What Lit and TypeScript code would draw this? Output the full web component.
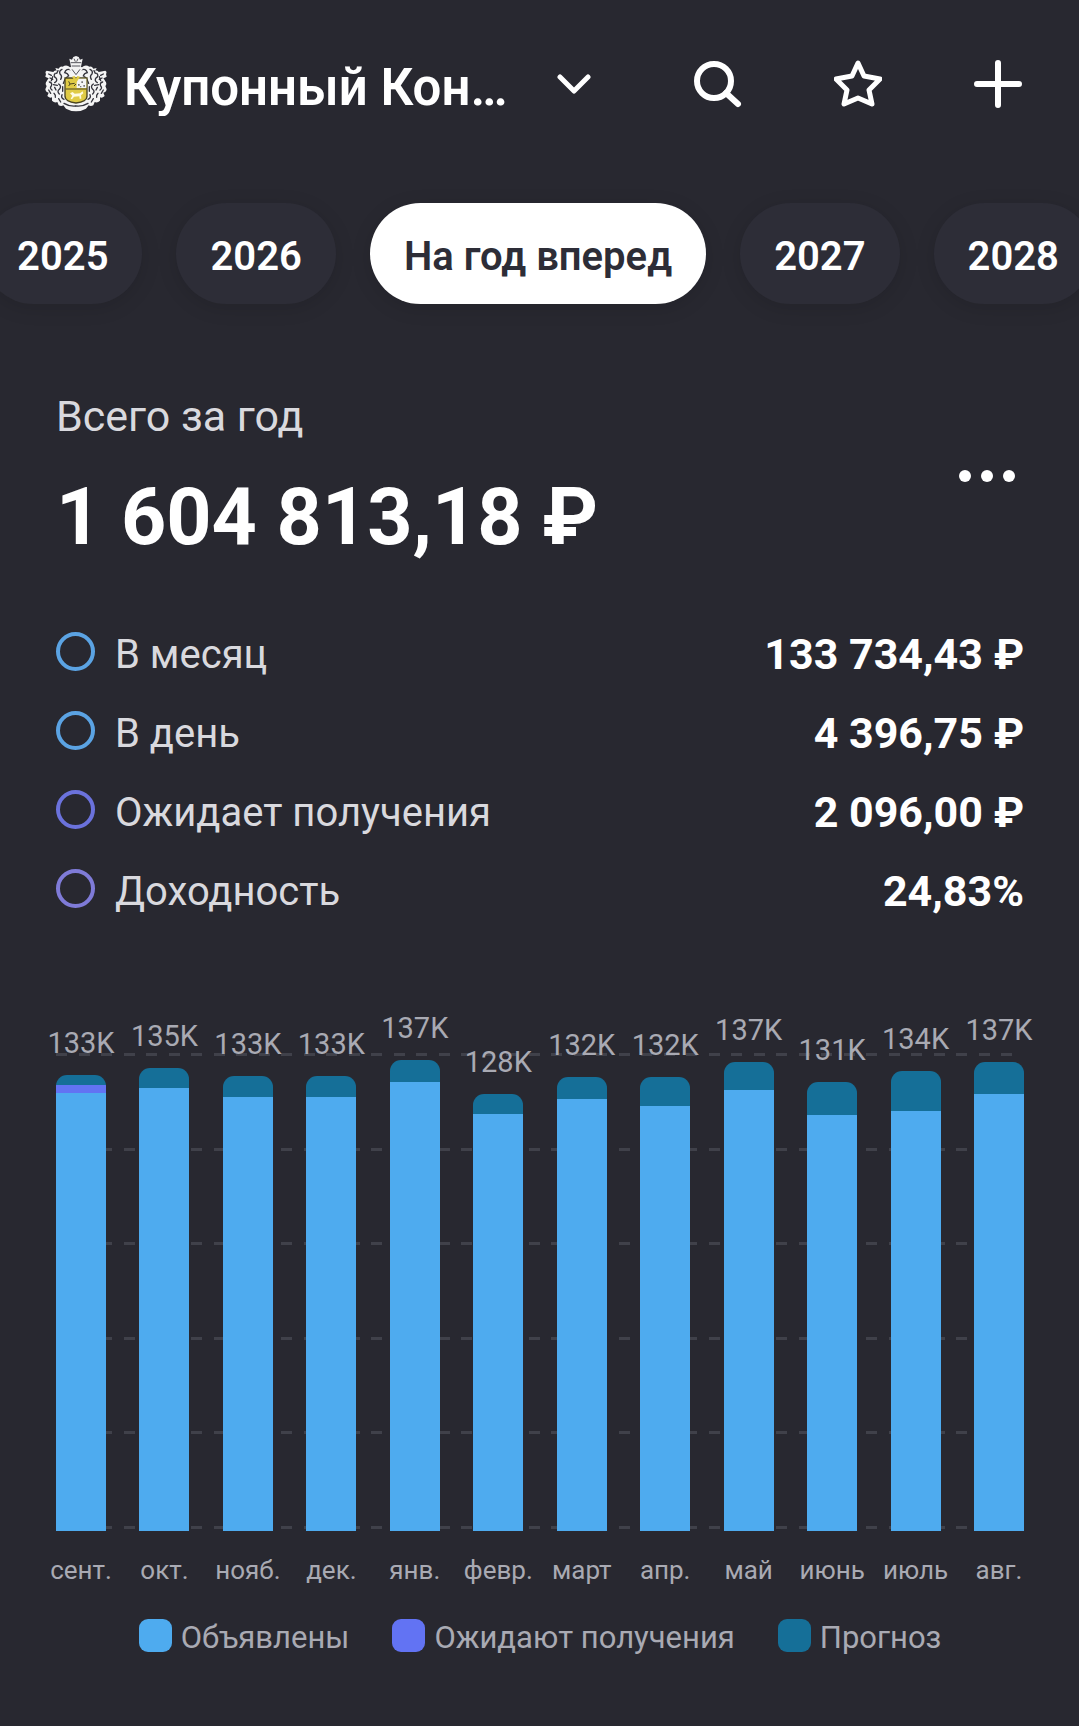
import {LitElement, html, css, svg} from "lit";
import {customElement, property, state} from "lit/decorators.js";
import {classMap} from "lit/directives/class-map.js";

interface Month {
  name: string;
  announced: number;
  pending: number;
  forecast: number;
}

// amounts are in thousands of roubles
const MONTHS: Month[] = [
  {name: "сент.", announced: 127.7, pending: 2.4, forecast: 2.9},
  {name: "окт.", announced: 129.1, pending: 0, forecast: 5.9},
  {name: "нояб.", announced: 126.6, pending: 0, forecast: 6},
  {name: "дек.", announced: 126.6, pending: 0, forecast: 6},
  {name: "янв.", announced: 131.1, pending: 0, forecast: 6.3},
  {name: "февр.", announced: 121.5, pending: 0, forecast: 6.1},
  {name: "март", announced: 126.1, pending: 0, forecast: 6.2},
  {name: "апр.", announced: 124.1, pending: 0, forecast: 8.2},
  {name: "май", announced: 128.5, pending: 0, forecast: 8.3},
  {name: "июнь", announced: 121.2, pending: 0, forecast: 9.9},
  {name: "июль", announced: 122.5, pending: 0, forecast: 11.8},
  {name: "авг.", announced: 127.6, pending: 0, forecast: 9.3},
];

const AXIS_MAX = 140;

const PERIODS = ["2025", "2026", "На год вперед", "2027", "2028"];

const STATS = [
  {label: "В месяц", value: "133 734,43 ₽", tone: "sky"},
  {label: "В день", value: "4 396,75 ₽", tone: "sky"},
  {label: "Ожидает получения", value: "2 096,00 ₽", tone: "indigo"},
  {label: "Доходность", value: "24,83%", tone: "violet"},
];

const LEGEND = [
  {label: "Объявлены", kind: "announced"},
  {label: "Ожидают получения", kind: "pending"},
  {label: "Прогноз", kind: "forecast"},
];

// one half of the crest, mirrored for the other side
const crestHalf = svg`
  <path fill="#f4f4f4" d="M92 30 L74 34 Q64 24 52 32 Q44 30 40 38 L30 36 L34 44 Q26 42 24 48 L12 46 L4 44 Q-2 48 2 54
    L0 62 Q6 66 10 66 L4 76 Q-2 84 4 90 L0 100 Q2 110 10 110 L6 120 Q14 128 20 124 L20 134 Q28 142 36 138
    L40 148 Q48 152 54 148 L62 158 Q76 166 92 166 Z" />
  <g fill="none" stroke="#34343c" stroke-width="4" stroke-linecap="round">
    <path d="M78 42 Q62 36 58 50 Q68 52 70 60" />
    <path d="M50 40 Q40 44 44 54 Q52 60 46 70" />
    <path d="M30 52 Q22 60 32 66 Q38 74 28 80" />
    <path d="M10 54 L18 58 M14 66 L22 70" />
    <path d="M12 78 Q22 80 18 90 Q12 96 20 102" />
    <path d="M40 84 Q50 90 42 100 Q34 106 42 114" />
    <path d="M28 94 L32 102 M26 112 Q32 118 30 124" />
    <path d="M10 102 L16 112" />
    <path d="M50 116 Q46 126 56 130" />
    <path d="M40 128 L46 138 M56 142 Q72 152 92 150" />
    <path d="M66 62 Q56 70 54 82" />
    <path d="M38 44 L34 52 M52 92 V106 M22 62 L18 74 M36 88 L24 86" />
  </g>
`;

@customElement("app-header")
export class AppHeader extends LitElement {
  static styles = css`
    :host {
      display: block;
    }
    .bar {
      display: flex;
      align-items: center;
      height: 64px;
      padding: 52px 57px 0 45px;
    }
    .crest {
      flex: none;
      width: 62px;
      height: 56px;
    }
    .account {
      flex: 1;
      min-width: 0;
      display: grid;
      align-items: center;
      margin: 0 103px 0 17px;
    }
    select {
      grid-area: 1 / 1;
      width: 100%;
      height: 64px;
      padding: 8px 48px 0 0;
      border: 0;
      appearance: none;
      background: none;
      color: #fff;
      font: 600 51px/56px Roboto, sans-serif;
    }
    .chevron {
      grid-area: 1 / 1;
      justify-self: end;
      width: 34px;
      height: 20px;
      pointer-events: none;
    }
    .actions {
      display: flex;
      gap: 92px;
    }
    button {
      display: block;
      width: 48px;
      height: 48px;
      padding: 0;
      border: 0;
      background: none;
      cursor: pointer;
    }
    .line {
      display: block;
      fill: none;
      stroke: #fff;
      stroke-linecap: round;
      stroke-linejoin: round;
    }
  `;

  render() {
    return html`
      <header class="bar">
        <svg class="crest" viewBox="0 0 184 168" aria-hidden="true">
          ${crestHalf}
          <g transform="matrix(-1 0 0 1 184 0)">${crestHalf}</g>
          <path fill="#f4f4f4" d="M72 8 L80 11 L84 3 L92 0 L100 3 L104 11 L112 8 L107 32 L112 40 L92 62 L72 40 L77 32 Z" />
          <path fill="none" stroke="#55555c" stroke-width="3" d="M76 20 L108 20 M79 30 L105 30 M86 8 L90 17 M98 8 L94 17 M80 40 L92 56 L104 40" />
          <path fill="#e0cb45" stroke="#4a4420" stroke-width="4" d="M59 66 L92 66 L125 66 L125 122 Q124 137 92 141 Q60 137 59 122 Z" />
          <path fill="#f4f4f4" d="M94 68 L123 68 L123 96 L94 96 Z" />
          <path fill="#777" d="M98 84 h5 v5 h-5 z M108 76 h5 v5 h-5 z M114 87 h5 v5 h-5 z M104 90 h4 v4 h-4 z" />
          <path fill="#e0cb45" d="M80 62 L92 82 L104 62 L96 60 L92 68 L88 60 Z" />
          <path fill="none" stroke="#4a4420" stroke-width="3" d="M70 76 L74 84 L88 82 M70 90 L74 84 M86 90 L92 84 M61 99 H123" />
          <path fill="#fffbe0" d="M74 112 L82 108 L88 113 L104 112 L112 106 L114 112 L107 118 L108 128 L103 128 L102 121 L86 122 L80 130 L76 128 L81 119 Z" />
        </svg>
        <div class="account">
          <select aria-label="Портфель">
            <option>Купонный Кон…</option>
          </select>
          <svg class="line chevron" viewBox="0 0 34 20" stroke-width="5" aria-hidden="true">
            <path d="M3 3 L17 17 L31 3" />
          </svg>
        </div>
        <div class="actions">
          <button aria-label="Поиск">
            <svg class="line" viewBox="0 0 48 48" stroke-width="6">
              <circle cx="20" cy="21" r="17" />
              <path d="M32 33 L44 44" />
            </svg>
          </button>
          <button aria-label="Избранное">
            <svg class="line" viewBox="0 0 48 48" stroke-width="5">
              <path d="M24 3 L30 16 L46 19 L35 30 L38 44 L24 38 L10 44 L13 30 L2 19 L18 16 Z" />
            </svg>
          </button>
          <button aria-label="Добавить">
            <svg class="line" viewBox="0 0 48 48" stroke-width="6">
              <path d="M24 3 V45 M3 24 H45" />
            </svg>
          </button>
        </div>
      </header>
    `;
  }
}

@customElement("income-chart")
export class IncomeChart extends LitElement {
  @property({attribute: false}) months: Month[] = [];

  static styles = css`
    :host {
      display: block;
      color: #a9aab3;
    }
    .plot {
      display: grid;
      height: 480px;
    }
    .lines {
      grid-area: 1 / 1;
      display: flex;
      flex-direction: column;
      justify-content: space-between;
      padding: 2px 0;
    }
    .gridline {
      height: 3px;
      background: repeating-linear-gradient(
        to right,
        #40414a 0 11px,
        transparent 11px 23px,
        #40414a 23px 34px,
        transparent 34px 45px
      );
    }
    .bars {
      grid-area: 1 / 1;
      display: flex;
      justify-content: space-between;
      height: 480px;
    }
    .column {
      display: flex;
      flex-direction: column;
      justify-content: flex-end;
      width: 50px;
      height: 100%;
    }
    .amount {
      align-self: center;
      margin-bottom: 15px;
      font-size: 29px;
      line-height: 34px;
    }
    .stack {
      flex: none;
      display: flex;
      flex-direction: column;
      border-radius: 11px 11px 0 0;
      overflow: hidden;
    }
    .announced {
      background: #4eabef;
    }
    .pending {
      background: #6273f3;
    }
    .forecast {
      background: #156f98;
    }
    .months {
      display: flex;
      justify-content: space-between;
      margin-top: 23px;
      font-size: 26px;
      line-height: 32px;
    }
    .month {
      display: flex;
      justify-content: center;
      width: 50px;
      white-space: nowrap;
    }
    .legend {
      display: flex;
      justify-content: center;
      gap: 43px;
      margin: 33px 0 0;
      padding: 0;
      list-style: none;
      font-size: 31px;
      line-height: 37px;
    }
    .entry {
      display: flex;
      gap: 9px;
    }
    .swatch {
      width: 33px;
      height: 33px;
      border-radius: 9px;
    }
  `;

  renderColumn(m: Month) {
    const total = m.announced + m.pending + m.forecast;
    return html`
      <div class="column">
        <span class="amount">${Math.round(total)}K</span>
        <div class="stack" style="height: ${(total / AXIS_MAX) * 100}%">
          <div class="forecast" style="flex: ${m.forecast}"></div>
          <div class="pending" style="flex: ${m.pending}"></div>
          <div class="announced" style="flex: ${m.announced}"></div>
        </div>
      </div>
    `;
  }

  render() {
    return html`
      <div class="plot">
        <div class="lines">
          ${[0, 1, 2, 3, 4, 5].map(() => html`<div class="gridline"></div>`)}
        </div>
        <div class="bars">${this.months.map((m) => this.renderColumn(m))}</div>
      </div>
      <div class="months">
        ${this.months.map((m) => html`<span class="month">${m.name}</span>`)}
      </div>
      <ul class="legend">
        ${LEGEND.map(
          (l) => html`
            <li class="entry"><span class="swatch ${l.kind}"></span>${l.label}</li>
          `
        )}
      </ul>
    `;
  }
}

@customElement("app-root")
export class AppRoot extends LitElement {
  @state() period = "На год вперед";

  static styles = css`
    :host {
      display: block;
      box-sizing: border-box;
      min-height: 100vh;
      padding-bottom: 64px;
      overflow: hidden;
      background: #282830;
      color: #fff;
      font-family: Roboto, sans-serif;
    }
    .periods {
      display: flex;
      justify-content: center;
      gap: 34px;
      margin-top: 87px;
      padding-right: 3px;
    }
    .pill {
      flex: none;
      height: 101px;
      padding: 6px 34px 0;
      border: 0;
      border-radius: 51px;
      background: #2d2d37;
      box-shadow: 0 4px 20px rgba(0, 0, 0, 0.12);
      color: #fff;
      font: 600 40px/48px Roboto, sans-serif;
      white-space: nowrap;
      cursor: pointer;
    }
    .pill.active {
      background: #fff;
      color: #2d2d37;
    }
    main {
      padding: 0 55px 0 56px;
    }
    .summary {
      display: flex;
      align-items: center;
      justify-content: space-between;
      margin-top: 88px;
    }
    .caption {
      margin: 0 0 35px;
      color: #d9d9de;
      font-size: 43px;
      line-height: 48px;
    }
    .total {
      margin: 0;
      font-size: 79px;
      font-weight: 700;
      line-height: 84px;
    }
    .more {
      display: flex;
      gap: 10px;
      padding: 9px;
      border: 0;
      background: none;
      cursor: pointer;
    }
    .dot {
      width: 12px;
      height: 12px;
      border-radius: 50%;
      background: #fff;
    }
    .stats {
      display: flex;
      flex-direction: column;
      gap: 31px;
      margin: 71px 0 136px;
    }
    .stat {
      display: flex;
      height: 48px;
    }
    .ring {
      box-sizing: border-box;
      width: 39px;
      height: 39px;
      margin: 2px 20px 0 0;
      border: 4px solid;
      border-radius: 50%;
    }
    .ring.sky {
      color: #5ba3e3;
    }
    .ring.indigo {
      color: #6b72dc;
    }
    .ring.violet {
      color: #7f7bd8;
    }
    dt {
      flex: 1;
      color: #d9d9de;
      font-size: 40px;
      line-height: 50px;
    }
    dd {
      margin: 0;
      font-size: 43px;
      font-weight: 700;
      line-height: 48px;
    }
  `;

  render() {
    return html`
      <app-header></app-header>
      <nav class="periods">
        ${PERIODS.map(
          (p) => html`
            <button
              class=${classMap({pill: true, active: p === this.period})}
              aria-pressed=${p === this.period}
              @click=${() => (this.period = p)}>
              ${p}
            </button>
          `
        )}
      </nav>
      <main>
        <section class="summary">
          <div>
            <p class="caption">Всего за год</p>
            <p class="total">1 604 813,18 ₽</p>
          </div>
          <button class="more" aria-label="Ещё">
            <span class="dot"></span><span class="dot"></span><span class="dot"></span>
          </button>
        </section>
        <dl class="stats">
          ${STATS.map(
            (s) => html`
              <div class="stat">
                <span class="ring ${s.tone}"></span>
                <dt>${s.label}</dt>
                <dd>${s.value}</dd>
              </div>
            `
          )}
        </dl>
        <income-chart .months=${MONTHS}></income-chart>
      </main>
    `;
  }
}
